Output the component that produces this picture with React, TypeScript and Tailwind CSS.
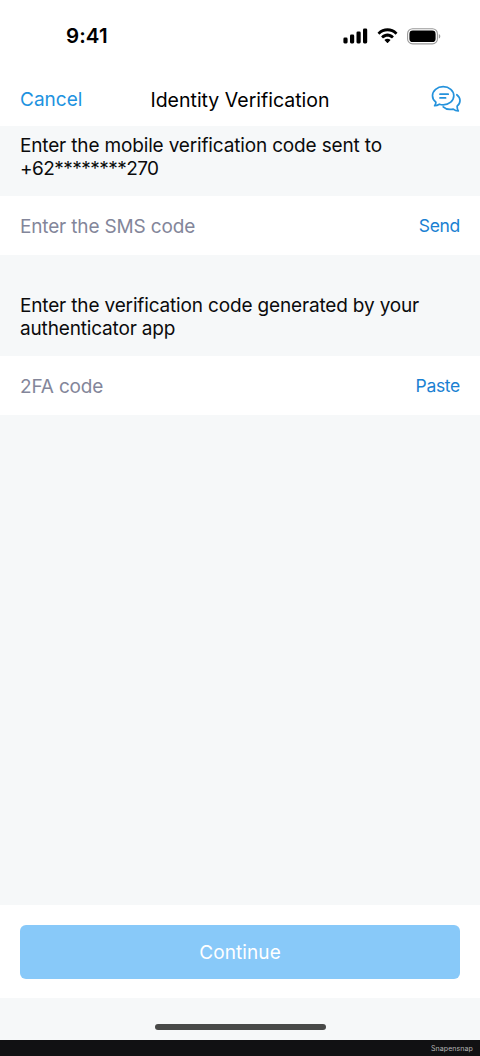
import type { ReactNode } from "react";

function SignalIcon() {
  return (
    <svg width="25" height="16" viewBox="0 0 25 16" fill="#000">
      <rect x="0.4" y="9.6" width="4.2" height="5.8" rx="1.3" />
      <rect x="7" y="6.6" width="4.2" height="8.8" rx="1.3" />
      <rect x="13.5" y="3.4" width="4.2" height="12" rx="1.3" />
      <rect x="20" y="0.4" width="4.2" height="15" rx="1.3" />
    </svg>
  );
}

function WifiIcon() {
  return (
    <svg width="21" height="16" viewBox="0 0 17 12.4" preserveAspectRatio="none">
      <path d="M8.5 2.6c2.3 0 4.6.9 6.3 2.5.1.1.3.1.4 0l1.2-1.3c.1-.1.1-.3 0-.4-4.4-4.2-11.4-4.2-15.8 0-.1.1-.1.3 0 .4l1.2 1.3c.1.1.3.1.4 0 1.7-1.6 4-2.5 6.3-2.5zm0 4.1c1.3 0 2.5.5 3.4 1.3.1.1.3.1.4 0l1.2-1.3c.1-.1.1-.3 0-.4-2.8-2.7-7.2-2.7-10 0-.1.1-.1.3 0 .4l1.2 1.3c.1.1.3.1.4 0 .9-.8 2.1-1.3 3.4-1.3zm2.3 2.8c.1-.1.1-.3 0-.4-1.3-1.1-3.3-1.1-4.6 0-.1.1-.1.3 0 .4l2.1 2.1c.1.1.3.1.4 0l2.1-2.1z" />
    </svg>
  );
}

function BatteryIcon() {
  return (
    <svg width="34" height="17" viewBox="0 0 34 17">
      <rect x="0.6" y="0.7" width="29.8" height="15.2" rx="5" fill="none" stroke="#999" strokeWidth="1.1" />
      <rect x="2.4" y="2.5" width="26.2" height="11.6" rx="3.4" fill="#000" />
      <path d="M31.8 6c1 .4 1.5 1.3 1.5 2.3s-.5 1.9-1.5 2.3z" fill="#999" />
    </svg>
  );
}

function ChatIcon() {
  return (
    <svg
      width="30"
      height="28"
      viewBox="0 0 30 28"
      fill="none"
      stroke="#2492dc"
      strokeWidth="1.7"
      strokeLinecap="round"
      strokeLinejoin="round"
    >
      <path d="M4.9 17.2C2.7 15.6 1.5 13.3 1.5 10.8 1.5 5.8 6.2 1.7 12.2 1.7s10.6 4.1 10.6 9.1-4.6 9-10.6 9c-1.4 0-2.6-.2-3.8-.6-1.4.9-3 1.5-4.8 1.5.8-1 1.3-2.2 1.3-3.5z" />
      <path d="M9 9.2h8.2M9 12.9h5.6" />
      <path d="M25.8 9.7c2 1.5 3.2 3.5 3.2 5.9 0 2.2-1.1 4.2-2.9 5.6 0 1.7.4 3.3 1.2 4.8-2-.1-3.7-.8-5-1.9-3.9.8-8-.2-10.1-2.2" />
    </svg>
  );
}

function StatusBar() {
  return (
    <div className="flex h-[72px] items-center justify-between pl-[66px] pr-[39px]">
      <span className="text-[20.5px] font-semibold tracking-[0.1px]">9:41</span>
      <div className="flex items-center gap-[9px]">
        <SignalIcon />
        <WifiIcon />
        <BatteryIcon />
      </div>
    </div>
  );
}

function Field({ label, action }: { label: string; action: string }) {
  return (
    <div className="flex h-[59px] items-center justify-between bg-white px-5 pt-px">
      <span className="pt-0.5 text-[19px] tracking-[-0.16px] text-[#83869a]">{label}</span>
      <button className="text-[17.5px] tracking-[-0.3px] text-[#1a81d2]">{action}</button>
    </div>
  );
}

function Prompt({ children }: { children: ReactNode }) {
  return (
    <p className="whitespace-nowrap text-[19px] leading-[23px] tracking-[-0.16px]">
      {children}
    </p>
  );
}

export default function App() {
  return (
    <div className="flex h-[1056px] w-[480px] flex-col overflow-hidden bg-[#f6f8f9] font-['Inter',sans-serif] text-[#0b0b0c]">
      <header className="h-[126px] bg-white text-black">
        <StatusBar />
        <div className="grid h-[54px] grid-cols-[1fr_auto_1fr] items-center px-5 pt-px">
          <button className="justify-self-start pt-px text-[19px] text-[#2092e0]">
            Cancel
          </button>
          <h1 className="pt-0.5 text-[19.5px]">Identity Verification</h1>
          <button className="-mr-[0.5px] justify-self-end pb-0.5">
            <ChatIcon />
          </button>
        </div>
      </header>

      <main className="flex-1">
        <div className="h-[70px] px-5 pt-2">
          <Prompt>
            Enter the mobile verification code sent to
            <br />
            <span className="tracking-[-0.54px]">+62********270</span>
          </Prompt>
        </div>
        <Field label="Enter the SMS code" action="Send" />
        <div className="h-[101px] px-5 pt-[39px]">
          <Prompt>
            Enter the verification code generated by your
            <br />
            authenticator app
          </Prompt>
        </div>
        <Field label="2FA code" action="Paste" />
      </main>

      <footer>
        <div className="h-[93px] bg-white px-5 pt-5">
          <button className="h-[54px] w-full rounded-md bg-[#88c9f9] pt-0.5 text-[19px] tracking-[0.1px] text-white">
            Continue
          </button>
        </div>
        <div className="flex h-[41.5px] justify-center pt-[25.5px]">
          <div className="h-1.5 w-[171px] rounded-full bg-[#484948]" />
        </div>
        <div className="flex h-[16.5px] items-center justify-end bg-[#111113] pr-[7px] pt-[3px]">
          <span className="text-[7px] tracking-[0.1px] text-[#b5b5b5]">Snapensnap</span>
        </div>
      </footer>
    </div>
  );
}
